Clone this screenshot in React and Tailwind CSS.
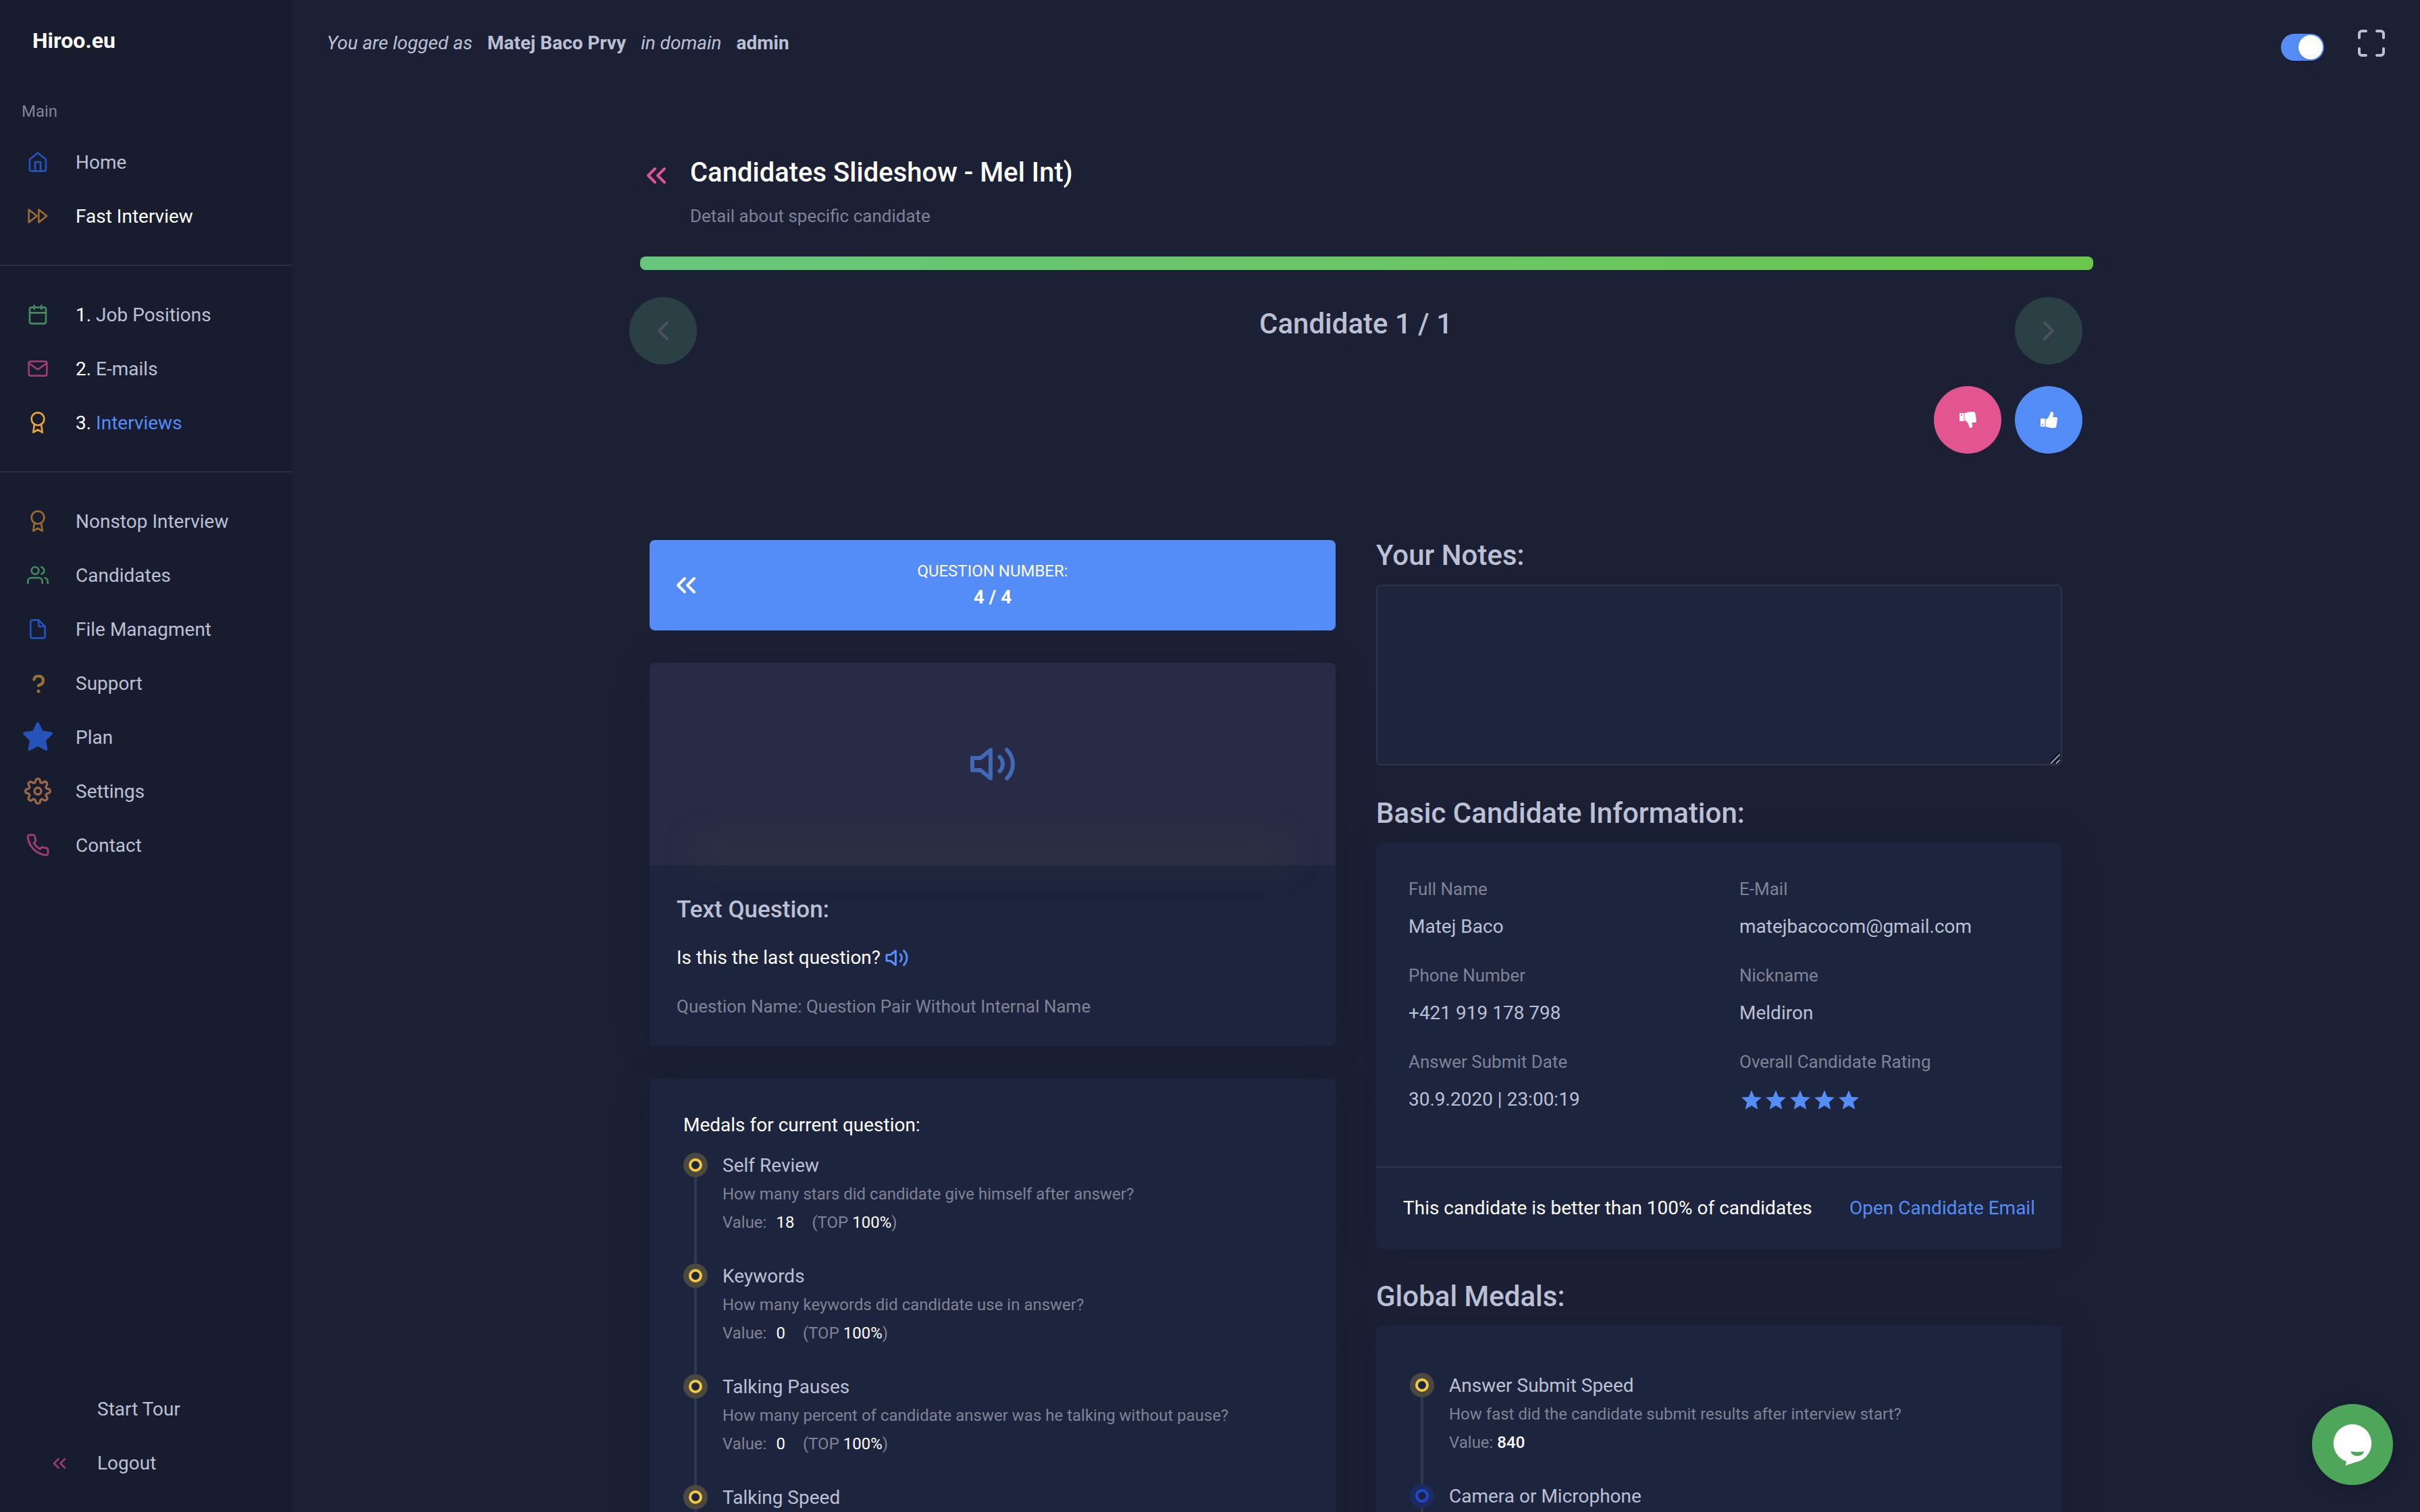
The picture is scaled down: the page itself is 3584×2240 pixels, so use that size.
import React, { useState } from "react";
import {
  FiHome, FiFastForward, FiCalendar, FiMail, FiAward, FiUsers, FiFile, FiStar, FiSettings,
  FiPhone, FiChevronsLeft, FiChevronLeft, FiChevronRight, FiMaximize, FiVolume2,
} from "react-icons/fi";
import { MdStar } from "react-icons/md";

function QuestionIcon({ size, className }) {
  return (
    <svg width={size} height={size} viewBox="0 0 32 32" fill="none" className={className} aria-hidden="true">
      <path d="M10.4 10.6C10.8 7.2 13.6 5.6 17 5.6C21 5.6 24 8.4 24 12.2C24 16 20.8 18.4 17 19.6" stroke="currentColor" strokeWidth="4.4" strokeLinecap="round" strokeLinejoin="round" />
      <circle cx="17" cy="28" r="2.5" fill="currentColor" />
    </svg>
  );
}

function ThumbIcon({ className }) {
  return (
    <svg width="25" height="24" viewBox="0 0 25 24" fill="currentColor" className={className} aria-hidden="true">
      <path fillRule="evenodd" d="M.6 10H5.4Q6 10 6 10.6V21.4Q6 22 5.4 22H.6Q0 22 0 21.4V10.6Q0 10 .6 10ZM3 18A1 1 0 1 0 3 20A1 1 0 1 0 3 18Z" />
      <path opacity=".5" d="M6 10H8V22H6Z" />
      <path d="M8 11.7C10.5 9.6 12.6 7.4 13.8 4.2C14.4 2.4 14.4 0 16.2 0C18.3 0 19.2 1.4 19.1 3.6C19 5.4 18.6 6.6 18.3 8H22.8C24.5 8 25.2 9 25 10.4L23.6 20.8C23.2 23.2 22 24 20 24C15.500 24 11.600 23.600 8 22Z" />
    </svg>
  );
}

const navGroups = [
  [
    { label: "Home", icon: FiHome, color: "text-[#2553b8]" },
    { label: "Fast Interview", icon: FiFastForward, color: "text-[#9a6c30]", text: "text-white" },
  ],
  [
    { num: "1.", label: "Job Positions", icon: FiCalendar, color: "text-[#438a5c]" },
    { num: "2.", label: "E-mails", icon: FiMail, color: "text-[#9c3d72]" },
    { num: "3.", label: "Interviews", icon: FiAward, color: "text-[#e9a23b]", text: "text-[#548cf8]" },
  ],
  [
    { label: "Nonstop Interview", icon: FiAward, color: "text-[#9a6c30]" },
    { label: "Candidates", icon: FiUsers, color: "text-[#438a5c]" },
    { label: "File Managment", icon: FiFile, color: "text-[#2553b8]" },
    { label: "Support", icon: QuestionIcon, color: "text-[#9a7030]" },
    { label: "Plan", icon: FiStar, size: 48, color: "text-[#2553b8] fill-current" },
    { label: "Settings", icon: FiSettings, size: 40, color: "text-[#9a6748]" },
    { label: "Contact", icon: FiPhone, size: 36, color: "text-[#9c3d72]" },
  ],
];

function NavItem({ item }) {
  const Icon = item.icon;
  return (
    <li>
      <a href="#" className="flex h-20 items-center">
        <span className="flex w-28 shrink-0 justify-center">
          <Icon size={item.size || 32} className={item.color} />
        </span>
        <span className={`pt-0.5 ${item.text || "text-[#bcc0d4]"}`}>
          {item.num && <span className="text-white">{item.num} </span>}
          {item.label}
        </span>
      </a>
    </li>
  );
}

function Sidebar() {
  return (
    <aside className="flex w-[432px] shrink-0 flex-col bg-[#171c2f]">
      <a href="#" className="mt-10 ml-12 text-[32px] leading-10 font-bold text-white">Hiroo.eu</a>
      <p className="mt-16 ml-8 text-2xl leading-[42px] text-[#7f8396]">Main</p>
      <nav className="mt-3.5">
        {navGroups.map((group, i) => (
          <ul key={i} className={i ? "mt-8 border-t-2 border-[#2b3044] pt-8" : ""}>
            {group.map((item) => <NavItem key={item.label} item={item} />)}
          </ul>
        ))}
      </nav>
      <div className="mt-auto mb-8 text-[#bcc0d4]">
        <a href="#" className="flex h-20 items-center pl-36">Start Tour</a>
        <a href="#" className="flex h-20 items-center pl-[72px]">
          <FiChevronsLeft size={32} className="mr-10 text-[#9c3d72]" />
          Logout
        </a>
      </div>
    </aside>
  );
}

function TopBar() {
  const [on, setOn] = useState(true);
  return (
    <header className="flex h-32 items-center pr-12 pl-[52px]">
      <p className="flex gap-[22px]">
        <em>You are logged as</em>
        <strong className="font-bold">Matej Baco Prvy</strong>
        <em>in domain</em>
        <strong className="font-bold">admin</strong>
      </p>
      <label className="mt-3 ml-auto flex h-10 w-16 cursor-pointer items-center rounded-full bg-[#548cf8] p-0.5">
        <input type="checkbox" checked={on} onChange={() => setOn(!on)} aria-label="Dark mode" className="peer sr-only" />
        <span className="size-9 rounded-full bg-white shadow-md peer-checked:ml-auto" />
      </label>
      <button type="button" aria-label="Fullscreen" className="ml-[46px]">
        <FiMaximize size={48} />
      </button>
    </header>
  );
}

function PageHeader() {
  return (
    <div className="ml-4 -mr-4">
      <div className="flex gap-[26px]">
        <a href="#" aria-label="Back" className="mt-2 text-[#e35591]"><FiChevronsLeft size={48} /></a>
        <div>
          <h1 className="text-[40px] leading-14 font-medium text-white">Candidates Slideshow - Mel Int)</h1>
          <p className="mt-4 text-[26px] leading-10 text-[#7f8396]">Detail about specific candidate</p>
        </div>
      </div>
      <div role="progressbar" aria-label="Slideshow progress" aria-valuenow={100} aria-valuemin={0} aria-valuemax={100} className="mt-10 h-5 rounded-lg bg-linear-to-r from-[#68c67c] to-[#6bc64c]" />
    </div>
  );
}

function Slideshow() {
  const round = "flex size-[100px] items-center justify-center rounded-full";
  return (
    <>
      <div className="mt-10 flex items-start justify-between">
        <button type="button" disabled aria-label="Previous candidate" className={`${round} bg-[#2a4044] text-[#4b5163]`}><FiChevronLeft size={48} /></button>
        <h2 className="mt-3 text-[42px] leading-14 font-medium">Candidate 1 / 1</h2>
        <button type="button" disabled aria-label="Next candidate" className={`${round} bg-[#2a4044] text-[#4b5163]`}><FiChevronRight size={48} /></button>
      </div>
      <div className="mt-8 flex justify-end gap-5 text-white">
        <button type="button" aria-label="Reject" className={`${round} bg-[#e35591]`}><ThumbIcon className="-scale-y-100" /></button>
        <button type="button" aria-label="Approve" className={`${round} bg-[#548cf8]`}><ThumbIcon /></button>
      </div>
    </>
  );
}

const questionMedals = [
  { title: "Self Review", text: "How many stars did candidate give himself after answer?", value: "18", top: "100%" },
  { title: "Keywords", text: "How many keywords did candidate use in answer?", value: "0", top: "100%" },
  { title: "Talking Pauses", text: "How many percent of candidate answer was he talking without pause?", value: "0", top: "100%" },
  { title: "Talking Speed" },
];

const globalMedals = [
  { title: "Answer Submit Speed", text: "How fast did the candidate submit results after interview start?", value: "840" },
  { title: "Camera or Microphone", blue: true },
];

function MedalValue({ medal }) {
  if (medal.top) {
    return (
      <p className="flex">
        Value: <span className="mx-3.5 text-white">{medal.value}</span>
        <span className="ml-3">(TOP <span className="text-white">{medal.top}</span>)</span>
      </p>
    );
  }
  return <p>Value: <span className="font-medium text-white">{medal.value}</span></p>;
}

function Medals({ items }) {
  return (
    <ul>
      {items.map((m, i) => (
        <li key={m.title} className="flex min-h-[164px] gap-[22px]">
          <div className="flex w-9 flex-col items-center">
            {i > 0 ? <span className="h-0.5 w-1 bg-[#2f3751]" /> : <span className="h-0.5" />}
            <span className={`flex size-9 shrink-0 items-center justify-center rounded-full ${m.blue ? "bg-[#1d2b5e]" : "bg-[#4b4840]"}`}>
              <span className={`size-5 rounded-full border-4 bg-[#1d243d] ${m.blue ? "border-[#2049d3]" : "border-[#f2c744]"}`} />
            </span>
            <span className="w-1 grow bg-[#2f3751]" />
          </div>
          <div className="text-2xl leading-[42px] text-[#7f8396]">
            <h4 className="text-[28px] leading-[42px] text-[#bcc0d4]">{m.title}</h4>
            {m.text && <p>{m.text}</p>}
            {m.value && <MedalValue medal={m} />}
          </div>
        </li>
      ))}
    </ul>
  );
}

const card = "rounded-lg bg-[#1d243d] shadow-[0_0_60px_rgba(18,22,36,0.12)]";
const heading = "mb-5 text-[42px] leading-[46px] font-medium";

function QuestionColumn() {
  return (
    <section>
      <div className="grid grid-cols-[48px_1fr_48px] items-center rounded-lg bg-[#548cf8] px-[30px] py-6 text-center text-white">
        <button type="button" aria-label="Previous question"><FiChevronsLeft size={48} /></button>
        <div>
          <p className="text-2xl leading-11">QUESTION NUMBER:</p>
          <p className="pb-2 leading-[34px] font-bold">4 / 4</p>
        </div>
      </div>

      <div className={`mt-12 ${card}`}>
        <div className="relative flex h-[300px] items-center justify-center rounded-t-lg bg-[#272b45]">
          <FiVolume2 size={72} className="text-[#4169b8]" />
          <div className="pointer-events-none absolute inset-x-16 bottom-0 h-10 rounded-full bg-[#465040]/20 blur-xl" />
        </div>
        <div className="px-10 pt-10 pb-[38px]">
          <h3 className="text-[35px] leading-[52px] font-medium">Text Question:</h3>
          <p className="mt-6 flex items-center gap-1.5 leading-[42px] text-white">
            Is this the last question?
            <button type="button" aria-label="Play question" className="text-[#548cf8]"><FiVolume2 size={36} /></button>
          </p>
          <p className="mt-7.5 text-[26px] leading-[42px] text-[#7f8396]">Question Name: Question Pair Without Internal Name</p>
        </div>
      </div>

      <div className={`mt-12 px-[50px] pt-12 pb-12 ${card}`}>
        <h3 className="mb-[18px] leading-[42px] text-white">Medals for current question:</h3>
        <Medals items={questionMedals} />
      </div>
    </section>
  );
}

const info = [
  ["Full Name", "Matej Baco"],
  ["E-Mail", "matejbacocom@gmail.com"],
  ["Phone Number", "+421 919 178 798"],
  ["Nickname", "Meldiron"],
  ["Answer Submit Date", "30.9.2020 | 23:00:19"],
  ["Overall Candidate Rating", null],
];

function Notes() {
  return (
    <>
      <h2 className={heading}><label htmlFor="notes">Your Notes:</label></h2>
      <div className="relative">
        <textarea id="notes" className="block h-[268px] w-full resize-none rounded-lg border-2 border-[#2c334b] bg-[#1d243d] p-5" />
        <svg width="16" height="16" viewBox="0 0 16 16" className="pointer-events-none absolute right-0.5 bottom-0.5" aria-hidden="true">
          <path d="M0 14L14 0M8 14L14 8" stroke="#0b0e18" strokeWidth="3" />
          <path d="M1 15L14.500 1.500M9 15L14.500 9.500" stroke="#c3c5cc" strokeWidth="1.500" />
        </svg>
      </div>
    </>
  );
}

function CandidateColumn() {
  return (
    <section>
      <Notes />

      <h2 className={`mt-12 ${heading}`}>Basic Candidate Information:</h2>
      <div className={card}>
        <dl className="grid grid-cols-2 gap-y-[30px] px-[18px] pt-12 pb-[78px]">
          {info.map(([label, value]) => (
            <div key={label} className="px-[30px]">
              <dt className="text-[26px] leading-[42px] text-[#7f8396]">{label}</dt>
              <dd className="mt-3.5 h-[42px] leading-[42px]">
                {value || (
                  <span role="img" aria-label="5 of 5 stars" className="flex pt-1 text-[#548cf8]">
                    {[1, 2, 3, 4, 5].map((n) => <MdStar key={n} size={36} />)}
                  </span>
                )}
              </dd>
            </div>
          ))}
        </dl>
        <div className="flex justify-between border-t-2 border-[#2e3650] px-10 py-[39px] leading-[42px]">
          <p className="text-white">This candidate is better than 100% of candidates</p>
          <a href="#" className="text-[#548cf8]">Open Candidate Email</a>
        </div>
      </div>

      <h2 className={`mt-12 ${heading}`}>Global Medals:</h2>
      <div className={`px-[50px] pt-[68px] pb-12 ${card}`}>
        <Medals items={globalMedals} />
      </div>
    </section>
  );
}

function ChatButton() {
  return (
    <button type="button" aria-label="Open chat" className="fixed right-10 bottom-10 rounded-full bg-[#4ea65b] shadow-[0_4px_24px_rgba(0,0,0,0.2)]">
      <svg width="120" height="120" viewBox="0 0 120 120" aria-hidden="true">
        <circle cx="60" cy="58.300" r="28.200" fill="#fff" />
        <path d="M51 84.500L49.800 91L72 83.800L66 78H52Z" fill="#fff" />
        <path d="M57.300 70.300C64 71.100 71 71.100 77.200 70.300C75.800 75 72 77 67.500 77C62.500 77 58.700 75 57.300 70.300Z" fill="#4ea65b" />
      </svg>
    </button>
  );
}

export default function App() {
  return (
    <div className="flex h-screen overflow-hidden bg-[#1b2035] font-[Roboto,sans-serif] text-[28px] text-[#bcc0d4]">
      <Sidebar />
      <main className="min-w-0 grow overflow-y-auto [scrollbar-width:none]">
        <TopBar />
        <div className="mx-auto mt-[100px] max-w-[2152px]">
          <PageHeader />
          <Slideshow />
          <div className="mt-32 grid grid-cols-2 items-start gap-[60px] px-[30px]">
            <QuestionColumn />
            <CandidateColumn />
          </div>
        </div>
      </main>
      <ChatButton />
    </div>
  );
}
